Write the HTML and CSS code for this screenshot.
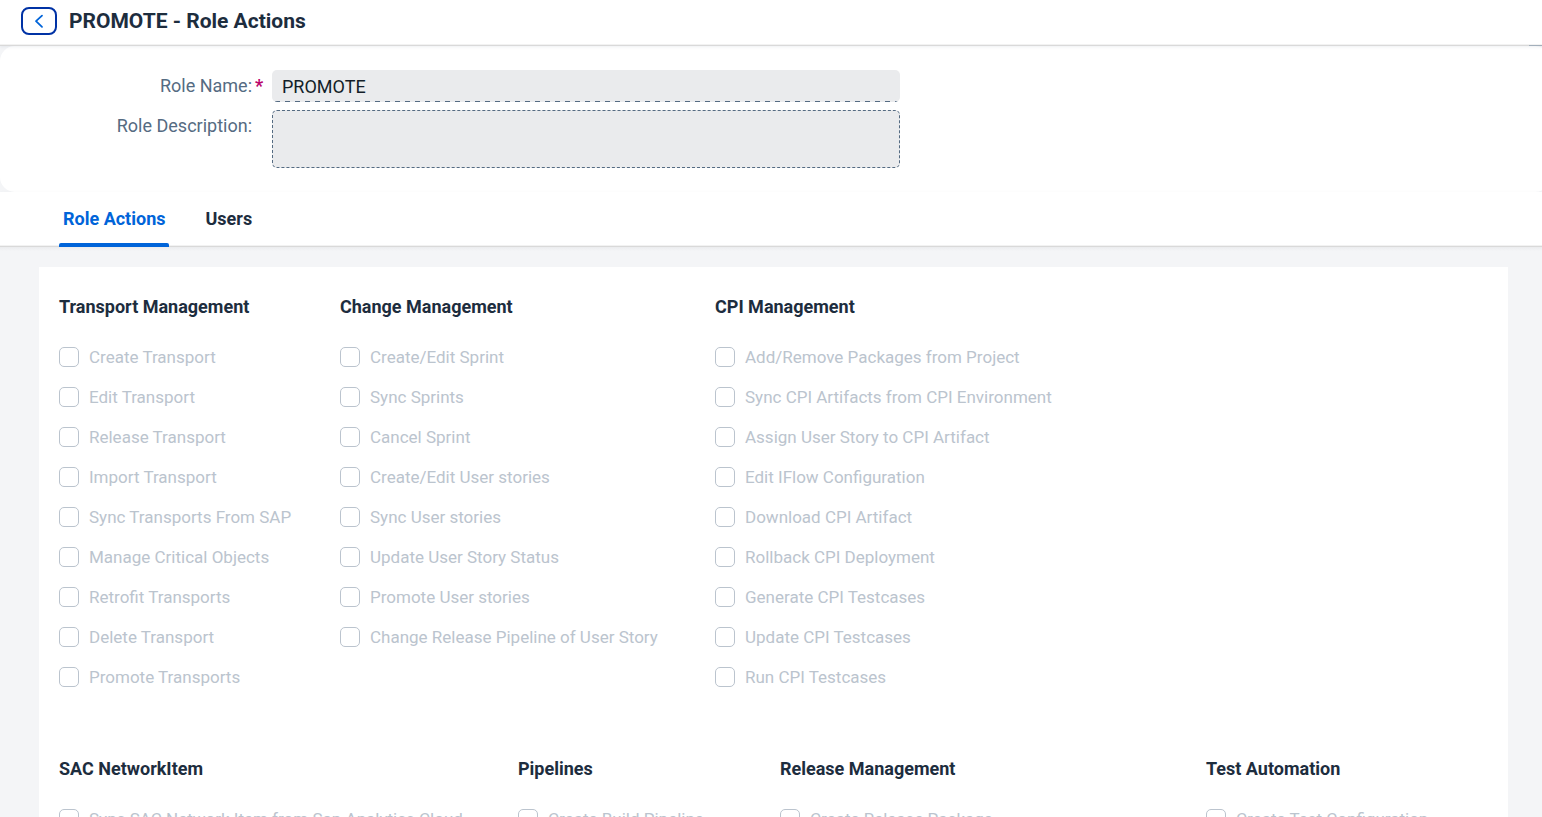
FILE: index.html
```html
<!DOCTYPE html>
<html lang="en">
<head>
<meta charset="utf-8">
<title>PROMOTE - Role Actions</title>
<link rel="stylesheet" href="styles.css">
</head>
<body>
<div class="page">
  <header class="bar">
    <button class="back" type="button" aria-label="Back">
      <svg width="16" height="16" viewBox="0 0 16 16" fill="none"><path d="M11 2.6 5 8.2l6 5.6" stroke="currentColor" stroke-width="1.8" stroke-linecap="round" stroke-linejoin="round"/></svg>
    </button>
    <h1 class="title">PROMOTE - Role Actions</h1>
  </header>
  <div class="form-area">
    <form class="form">
      <label class="label" for="name">Role Name:</label><span class="required">*</span>
      <input class="field" id="name" type="text" value="PROMOTE" readonly>
      <label class="label" for="desc">Role Description:</label><span class="required"></span>
      <textarea class="area" id="desc" readonly></textarea>
    </form>
  </div>
  <nav class="tabs">
    <button class="tab tab-active" type="button">Role Actions</button>
    <button class="tab" type="button">Users</button>
  </nav>
  <main class="content">
    <div class="card">
      <div class="groups groups-three">
        <section class="group">
          <h2 class="heading">Transport Management</h2>
          <label class="check"><input type="checkbox" disabled>Create Transport</label>
          <label class="check"><input type="checkbox" disabled>Edit Transport</label>
          <label class="check"><input type="checkbox" disabled>Release Transport</label>
          <label class="check"><input type="checkbox" disabled>Import Transport</label>
          <label class="check"><input type="checkbox" disabled>Sync Transports From SAP</label>
          <label class="check"><input type="checkbox" disabled>Manage Critical Objects</label>
          <label class="check"><input type="checkbox" disabled>Retrofit Transports</label>
          <label class="check"><input type="checkbox" disabled>Delete Transport</label>
          <label class="check"><input type="checkbox" disabled>Promote Transports</label>
        </section>
        <section class="group">
          <h2 class="heading">Change Management</h2>
          <label class="check"><input type="checkbox" disabled>Create/Edit Sprint</label>
          <label class="check"><input type="checkbox" disabled>Sync Sprints</label>
          <label class="check"><input type="checkbox" disabled>Cancel Sprint</label>
          <label class="check"><input type="checkbox" disabled>Create/Edit User stories</label>
          <label class="check"><input type="checkbox" disabled>Sync User stories</label>
          <label class="check"><input type="checkbox" disabled>Update User Story Status</label>
          <label class="check"><input type="checkbox" disabled>Promote User stories</label>
          <label class="check"><input type="checkbox" disabled>Change Release Pipeline of User Story</label>
        </section>
        <section class="group">
          <h2 class="heading">CPI Management</h2>
          <label class="check"><input type="checkbox" disabled>Add/Remove Packages from Project</label>
          <label class="check"><input type="checkbox" disabled>Sync CPI Artifacts from CPI Environment</label>
          <label class="check"><input type="checkbox" disabled>Assign User Story to CPI Artifact</label>
          <label class="check"><input type="checkbox" disabled>Edit IFlow Configuration</label>
          <label class="check"><input type="checkbox" disabled>Download CPI Artifact</label>
          <label class="check"><input type="checkbox" disabled>Rollback CPI Deployment</label>
          <label class="check"><input type="checkbox" disabled>Generate CPI Testcases</label>
          <label class="check"><input type="checkbox" disabled>Update CPI Testcases</label>
          <label class="check"><input type="checkbox" disabled>Run CPI Testcases</label>
        </section>
      </div>
      <div class="groups groups-four">
        <section class="group">
          <h2 class="heading">SAC NetworkItem</h2>
          <label class="check"><input type="checkbox" disabled>Sync SAC Network Item from Sap Analytics Cloud</label>
        </section>
        <section class="group">
          <h2 class="heading">Pipelines</h2>
          <label class="check"><input type="checkbox" disabled>Create Build Pipeline</label>
        </section>
        <section class="group">
          <h2 class="heading">Release Management</h2>
          <label class="check"><input type="checkbox" disabled>Create Release Package</label>
        </section>
        <section class="group">
          <h2 class="heading">Test Automation</h2>
          <label class="check"><input type="checkbox" disabled>Create Test Configuration</label>
        </section>
      </div>
    </div>
  </main>
</div>
</body>
</html>
```
FILE: styles.css
```css
* { box-sizing: border-box; }

body {
  margin: 0;
  background: #f4f5f7;
  color: #1d2d3e;
  font: 18px/20px Roboto, "Liberation Sans", sans-serif;
}

.page {
  display: flex;
  flex-direction: column;
  height: 100vh;
  overflow: hidden;
}

.bar {
  position: relative;
  display: flex;
  flex: none;
  align-items: center;
  gap: 12px;
  padding: 7px 21px 10px;
  background: #fff;
  border-bottom: 1px solid #d9d9d9;
  box-shadow: 0 1px 3px rgba(85, 107, 130, 0.1), inset 0 -1px #f2f2f2;
}

.bar::after {
  content: "";
  position: absolute;
  right: 0;
  bottom: -1px;
  width: 13px;
  height: 1px;
  background: #a3afbb;
}

.back {
  display: grid;
  place-items: center;
  width: 36px;
  height: 28px;
  padding: 0;
  border: 2px solid #0032a5;
  border-radius: 8px;
  background: #fff;
  color: #0064d9;
}

.title {
  margin: 0;
  font-size: 21px;
  line-height: 28px;
  font-weight: 700;
}

.form-area {
  flex: none;
  margin-right: -8px;
  padding: 24px 0;
  border-radius: 15px;
  background: #fff;
}

.form {
  display: grid;
  grid-template-columns: 252px 20px minmax(0, 628px);
  row-gap: 8px;
  padding-right: 28px;
}

.label {
  padding-top: 6px;
  color: #556b82;
  text-align: right;
}

.required {
  padding: 6px 0 0 3px;
  color: #ba066c;
  font-weight: 700;
}

.field,
.area {
  width: 100%;
  margin: 0;
  border: 0;
  border-radius: 5px;
  outline: 0;
  background: #eaebed;
  color: #131e29;
  font: inherit;
}

.field {
  height: 32px;
  padding: 0 10px;
  background:
    repeating-linear-gradient(90deg, transparent 0 3px, #556b82 3px 8px, transparent 8px 10px) bottom / 100% 1px no-repeat,
    #eaebed;
}

.area {
  display: block;
  height: 58px;
  padding: 6px 10px;
  border: 1px dashed #556b82;
  resize: none;
}

.tabs {
  display: flex;
  flex: none;
  gap: 32px;
  padding: 0 59px;
  background: #fff;
  border-bottom: 1px solid #d9d9d9;
  box-shadow: 0 2px 4px rgba(85, 107, 130, 0.1), inset 0 -1px #f2f2f2;
}

.tab {
  height: 55px;
  margin-bottom: -1px;
  padding: 0 4px 1px;
  border: 0;
  background: none;
  color: inherit;
  font: inherit;
  font-weight: 700;
}

.tab-active {
  position: relative;
  color: #0064d9;
}

.tab-active::after {
  content: "";
  position: absolute;
  right: 0;
  bottom: 0;
  left: 0;
  height: 4px;
  border-radius: 2px 2px 0 0;
  background: #0064d9;
}

.content {
  flex: 1;
  min-height: 0;
  overflow-y: auto;
  padding: 20px 34px 0 39px;
  background: linear-gradient(#ebecee, #f4f5f7 4px);
  scrollbar-width: none;
}

.card {
  padding: 20px;
  background: #fff;
}

.groups { display: grid; }
.groups-three { grid-template-columns: 281fr 375fr 773fr; }

.groups-four {
  grid-template-columns: 459fr 262fr 426fr 282fr;
  padding-top: 32px;
}

.group {
  display: flex;
  flex-direction: column;
  min-width: 0;
  padding-bottom: 20px;
}

.heading {
  margin: 0;
  padding: 10px 0 20px;
  font-size: 18px;
  line-height: 20px;
  font-weight: 700;
}

.check {
  display: flex;
  align-items: center;
  gap: 10px;
  height: 40px;
  color: #bbc4ce;
  font-size: 17px;
  white-space: nowrap;
}

.check input {
  flex: none;
  width: 20px;
  height: 20px;
  margin: 0;
  border: 1px solid #bbc4ce;
  border-radius: 5px;
  background: #fff;
  appearance: none;
}
```
